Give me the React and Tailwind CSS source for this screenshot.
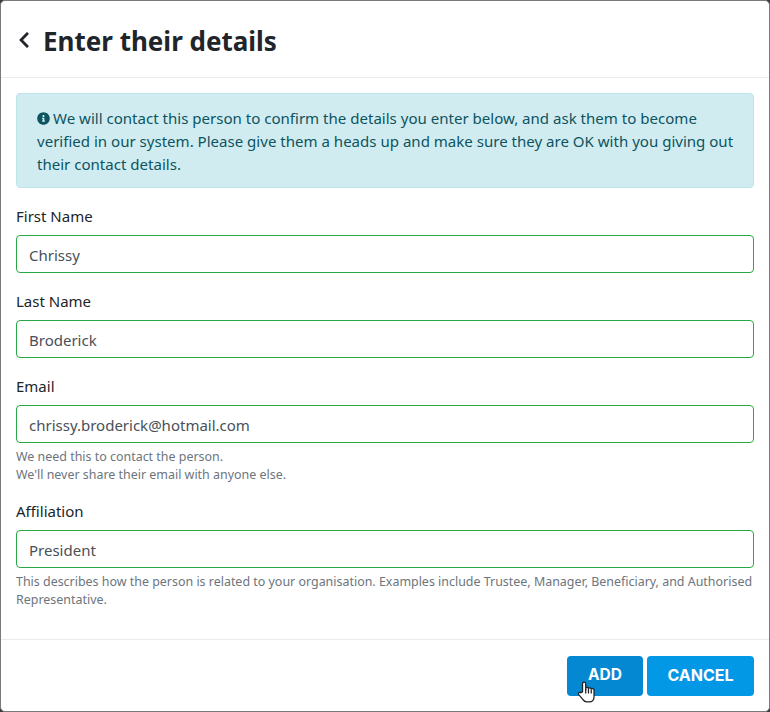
import React from 'react';
import { FaChevronLeft, FaInfoCircle } from 'react-icons/fa';

function Field({ label, value, help }) {
  return (
    <div className={help ? 'mb-4' : 'mb-[17px]'}>
      <label className="block text-[15px] leading-[22px] text-[#212529] mb-2">{label}</label>
      <input
        readOnly
        value={value}
        className="block w-full h-[38px] px-3 pt-[2px] rounded border border-[#28a745] bg-white text-[15px] text-[#495057] outline-none font-['Noto_Sans',sans-serif]"
      />
      {help && <small className="block mt-[5px] text-[12.45px] leading-[18px] text-[#6c757d]">{help}</small>}
    </div>
  );
}

export default function App() {
  return (
    <div className="w-[770px] h-[712px] bg-[#3a3a3a] overflow-hidden font-['Noto_Sans',sans-serif]">
      <div className="w-[770px] h-[712px] flex flex-col bg-white border border-[#7a7a7a] rounded-[5px]">
        {/* Header */}
        <div className="h-[77px] shrink-0 flex items-center pl-[14px] border-b border-[#e9ecef]">
          <FaChevronLeft size={18} className="text-[#212529] mt-[2px]" />
          <h5 className="ml-[10px] mt-1 text-[26px] font-bold text-[#212529]">Enter their details</h5>
        </div>

        {/* Body */}
        <div className="flex-1 pt-[15px] px-[15px]">
          <div className="mb-[17px] h-[95px] rounded border border-[#bee5eb] bg-[#d1ecf1] pl-5 pr-4 pt-[13px] text-[15.05px] leading-[23px] text-[#0c5460]">
            <FaInfoCircle size={13} className="inline-block mr-[3px] mb-[2px] align-middle" />
            We will contact this person to confirm the details you enter below, and ask them to become verified in our system. Please give them a heads up and make sure they are OK with you giving out their contact details.
          </div>

          <Field label="First Name" value="Chrissy" />
          <Field label="Last Name" value="Broderick" />
          <Field
            label="Email"
            value="chrissy.broderick@hotmail.com"
            help={<>We need this to contact the person.<br />We'll never share their email with anyone else.</>}
          />
          <Field
            label="Affiliation"
            value="President"
            help="This describes how the person is related to your organisation. Examples include Trustee, Manager, Beneficiary, and Authorised Representative."
          />
        </div>

        {/* Footer */}
        <div className="h-[72px] shrink-0 flex items-start justify-end gap-1 pt-4 pr-[15px] border-t border-[#e9ecef]">
          <button className="relative w-[76px] h-[40px] pb-[2px] rounded bg-[#0388d1] text-white text-[15.5px] font-bold font-['Inter',sans-serif]">
            ADD
            <svg viewBox="0 0 24 28" className="absolute left-[10px] top-[23px] w-[19px] h-[26px]" fill="#fff" stroke="#222" strokeWidth="1.6" strokeLinejoin="round">
              <path d="M7 14V3.5a2 2 0 0 1 4 0V11l0-2a2 2 0 0 1 3.5 0.5 2 2 0 0 1 3.5 0.8 2 2 0 0 1 3.5 1V20c0 4-2.5 6.5-6 6.500h-3c-2.500 0-4-1-5.500-3.500L2 17c-1-2 1.500-3.500 3-2z" />
              <path d="M11 10v6M14.500 10v6M18 11v5" fill="none" />
            </svg>
          </button>
          <button className="w-[107px] h-[40px] pb-[2px] rounded bg-[#0398e6] text-white text-[16px] font-bold font-['Inter',sans-serif]">CANCEL</button>
        </div>
      </div>
    </div>
  );
}
